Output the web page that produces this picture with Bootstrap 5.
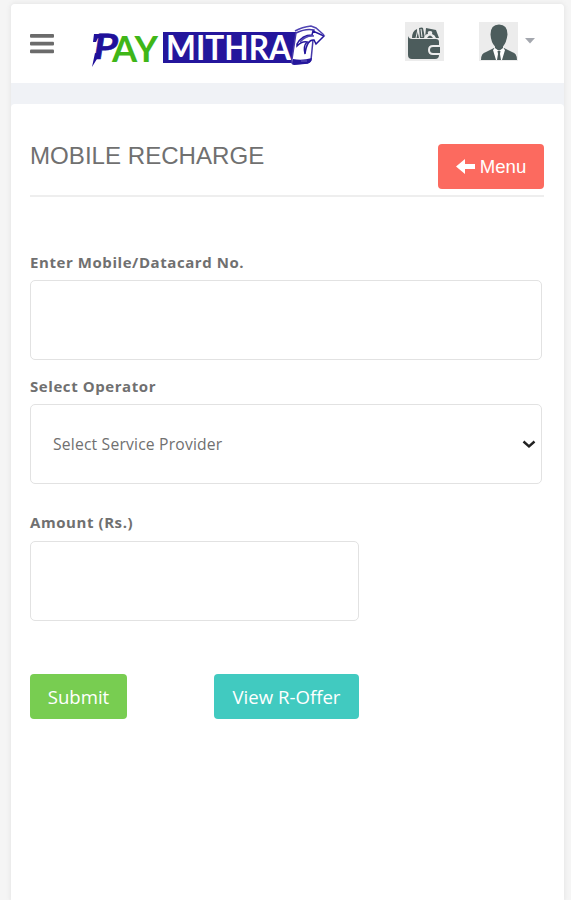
<!DOCTYPE html>
<html lang="en">
<head>
<meta charset="utf-8">
<meta name="viewport" content="width=device-width, initial-scale=1">
<title>Mobile Recharge</title>
<link href="https://cdn.jsdelivr.net/npm/bootstrap@5.3.0/dist/css/bootstrap.min.css" rel="stylesheet">
<style>
html,body{height:100%}
body{background:#f5f5f5;font-family:"Open Sans",sans-serif;color:#6c6c6c;padding:4px 7px 0 11px;overflow:hidden}
.shell{height:896px;background:#f0f2f6;border-radius:4px 4px 0 0;box-shadow:0 0 4px 1px #e6e6e6}
.topbar{height:79px;border-radius:4px 4px 0 0;padding-left:19px;padding-right:29px}
.logo{margin-left:30px;margin-top:7px}
.tools{margin-bottom:5px}
.account{margin-left:35px}
.caret{margin-left:7px}
.panel{margin-top:21px;height:796px;border-radius:4px 4px 0 0;padding:40px 20px 0 19px}
.page-head{height:53px;border-bottom:2px solid #eee}
.page-title{font:400 24.100px/24px "Liberation Sans",sans-serif;color:#707070;white-space:nowrap}
.act{height:45px;border:0;border-radius:4px;color:#fff;font-size:18.6px;line-height:45px;padding:0;white-space:nowrap}
.act:hover{color:#fff}
.act-menu{background:#fc6a5f;width:106px;font-family:"Liberation Sans",sans-serif}
.act-submit{background:#78cd51;width:97px}
.act-offer{background:#41cac0;width:145px}
.field-label{display:block;font-size:15px;line-height:20px;font-weight:700;letter-spacing:.57px;color:#707070}
.field-box{height:80px;width:512px;border:1.5px solid #e2e2e2;border-radius:5px;font-size:15.7px;letter-spacing:.18px;color:#707070;padding-left:22px}
.form-select.field-box{background-image:none;padding-right:30px;padding-top:7px}
.field-box.amount{width:329px;margin-top:9px}
.chev{right:8px;top:36px}
.first{margin-top:55px}
.box-gap{margin-top:8px}
.second{margin-top:16px}
.third{margin-top:28px}
.actions{margin-top:53px;width:329px}
</style>
<script defer src="https://cdn.jsdelivr.net/npm/bootstrap@5.3.0/dist/js/bootstrap.bundle.min.js"></script>
</head>
<body>
<div class="shell">
  <header class="topbar bg-white d-flex align-items-center">
    <button class="btn border-0 p-0 d-flex" aria-label="Toggle menu">
      <svg width="24" height="20" viewBox="0 0 24 20" fill="#6b6b6b"><rect y="0" width="24" height="3.700" rx="1"/><rect y="7.800" width="24" height="3.700" rx="1"/><rect y="15.600" width="24" height="3.700" rx="1"/></svg>
    </button>
    <a href="#" class="logo d-flex" aria-label="Pay Mithra">
      <svg width="246" height="54" viewBox="84 20 246 54" font-family="Lato,sans-serif">
        <text transform="translate(92 59) skewX(-9)" font-size="35" font-weight="700" fill="#20109a" stroke="#20109a" stroke-width=".6" textLength="24" lengthAdjust="spacingAndGlyphs">P</text>
        <path d="M94 34h8l-1 4h-3l-2 4h-3zM95 53l5 1-8 13z" fill="#20109a"/>
        <text x="112" y="62" font-size="37" font-weight="700" fill="#3fb618" textLength="46" lengthAdjust="spacingAndGlyphs">AY</text>
        <path d="M163 32h134l-4 31H163z" fill="#24169c"/>
        <text x="166" y="60" font-size="35" font-weight="700" fill="#fff" textLength="125" lengthAdjust="spacingAndGlyphs">MITHRA</text>
        <path d="M296 33q10-5 18-3l-3 30q-1 3-6 3l-12 1q-2-1-1-5z" fill="#fff" stroke="#4639aa" stroke-width="1.500"/>
        <path d="M293 59q9 2 19-1-1 6-7 6l-11 1q-3-2-1-6z" fill="#24169c"/>
        <path d="M297 44q5-9 15-9l1-4 11 5-8 8-2-4q-7-1-9 14-2-8 2-12-5-1-10 4z" fill="#fff" stroke="#24169c" stroke-width="1.500"/>
        <path d="M295 31q7-4 16-5l5 2 8 7M300 42q6-7 14-6M301 61h6" fill="none" stroke="#5145b4" stroke-width="1.500"/>
      </svg>
    </a>
    <div class="tools ms-auto d-flex align-items-center flex-shrink-0">
      <svg width="39" height="39" viewBox="0 0 39 39" aria-label="Wallet">
        <rect width="39" height="39" fill="#ececec"/>
        <path d="M7 16q0-7 5-9l2 9zM14 6q3-1 4 0l2 10h-5zM21 6l10 2 3 8H20z" fill="#4c5c5c"/>
        <path d="M11 16l2-9m4 8l-1-8" fill="none" stroke="#ececec" stroke-width="1"/>
        <path d="M19 16q1-4 4-4-1-3 2-3 3 0 2 3 3 1 4 4z" fill="#ececec"/><path d="M22 16q3-5 6 0z" fill="#4c5c5c"/>
        <path d="M3 14q1 3 4 3h24q3 0 3 3v3h-6q-5 0-5 5t5 5h6q0 4-4 4H7q-4 0-4-4z" fill="#4c5c5c"/>
        <path d="M28 25h7v6h-7q-3 0-3-3t3-3z" fill="#4c5c5c"/>
      </svg>
      <div class="account d-flex align-items-center">
        <svg width="39" height="39" viewBox="0 0 39 39" aria-label="Account">
          <rect width="39" height="39" fill="#ececec"/>
          <path d="M20 2.500q8.500 0 8.500 10-1 8-4.500 12v4h-8v-4q-4-4-4.500-12 0-10 8.500-10z" fill="#4c5c5c"/>
          <path d="M2 38q0-7 5-8l8-4 5 11 5-11 8 4q5 1 5 8z" fill="#4c5c5c"/>
          <path d="M14 28l2-2 4 3 4-3 2 2-3 10h-6z" fill="#fff"/><path d="M18.500 29h3l-.5 3 1 6h-4l1-6z" fill="#4c5c5c"/>
        </svg>
        <svg class="caret" width="10" height="6" viewBox="0 0 10 6"><path d="M0 0h10L5 5.500z" fill="#a4a7ae"/></svg>
      </div>
    </div>
  </header>
  <main class="panel bg-white">
    <div class="page-head d-flex justify-content-between align-items-start">
      <h1 class="page-title mb-0">MOBILE RECHARGE</h1>
      <a href="#" class="btn act act-menu d-flex align-items-center justify-content-center gap-1">
        <svg width="20" height="16" viewBox="0 0 20 16" fill="#fff"><path d="M0 7.500L9 0v5h10v5H9v5z"/></svg><span>Menu</span>
      </a>
    </div>
    <form>
      <label class="field-label first" for="mobile">Enter Mobile/Datacard No.</label>
      <input id="mobile" class="form-control field-box box-gap" type="text">
      <label class="field-label second" for="operator">Select Operator</label>
      <div class="position-relative box-gap">
        <select id="operator" class="form-select field-box"><option>Select Service Provider</option></select>
        <svg class="chev position-absolute pe-none" width="14" height="9" viewBox="0 0 14 9"><path d="M1.500 1.500L7 6.500l5.500-5" fill="none" stroke="#222" stroke-width="2.400"/></svg>
      </div>
      <label class="field-label third" for="amount">Amount (Rs.)</label>
      <input id="amount" class="form-control field-box amount" type="text">
      <div class="actions d-flex justify-content-between">
        <button type="button" class="btn act act-submit">Submit</button>
        <button type="button" class="btn act act-offer">View R-Offer</button>
      </div>
    </form>
  </main>
</div>
</body>
</html>
